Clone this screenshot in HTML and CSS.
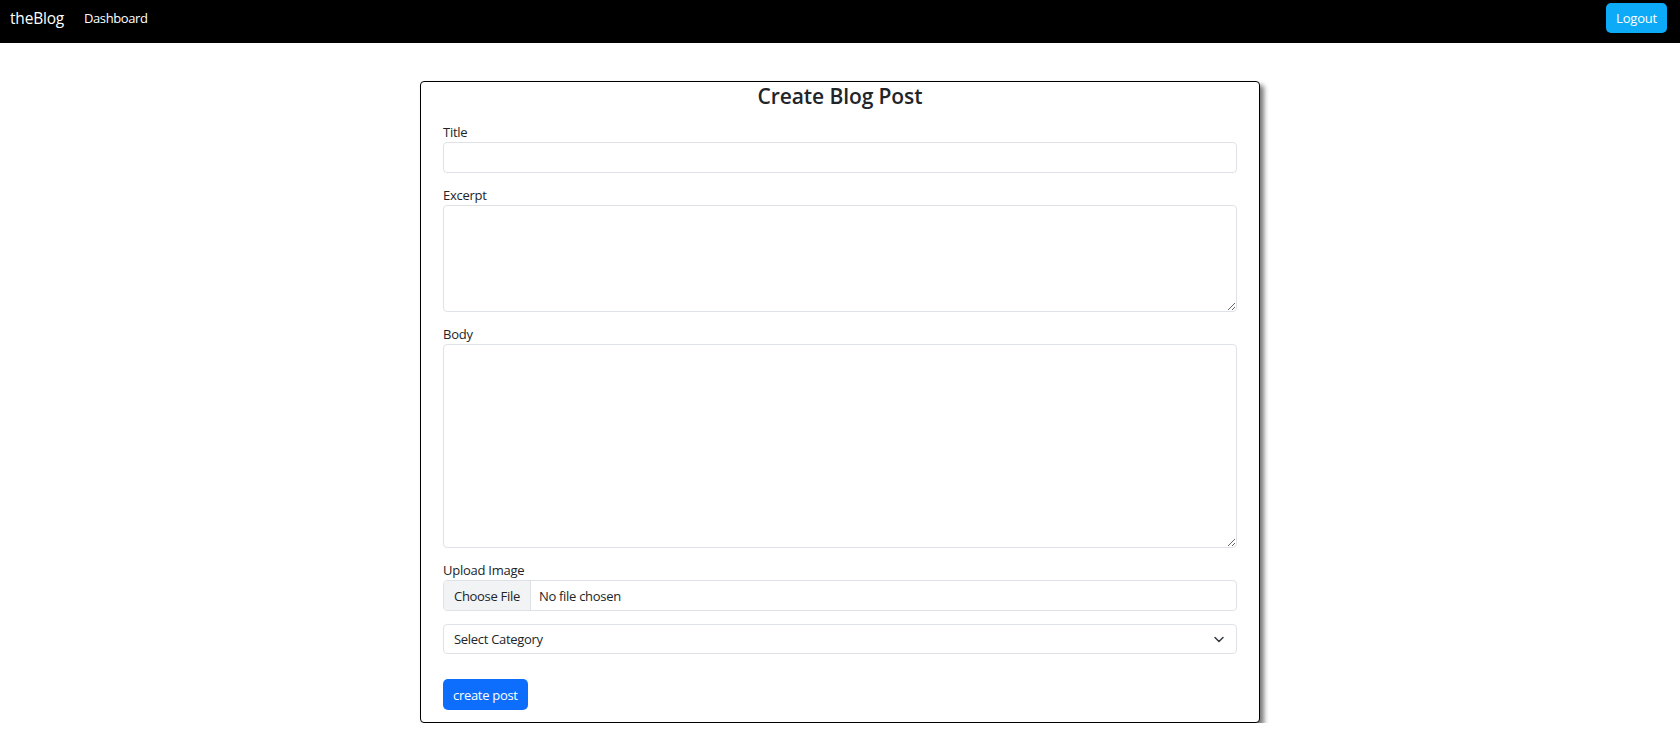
FILE: index.html
```html
<!DOCTYPE html>
<html lang="en">
<head>
<meta charset="utf-8">
<title>theBlog - Create Blog Post</title>
<link rel="stylesheet" href="styles.css">
</head>
<body>
<nav class="navbar">
  <div class="nav-row">
    <div class="nav-left">
      <a class="brand" href="#">theBlog</a>
      <a class="nav-link" href="#">Dashboard</a>
    </div>
    <button class="btn-logout" type="button">Logout</button>
  </div>
</nav>
<main class="page">
  <form class="card">
    <h3 class="card-title">Create Blog Post</h3>
    <div class="field">
      <label class="label" for="title">Title</label>
      <input class="control" id="title" type="text">
    </div>
    <div class="field">
      <label class="label" for="excerpt">Excerpt</label>
      <textarea class="control area-excerpt" id="excerpt"></textarea>
    </div>
    <div class="field">
      <label class="label" for="body">Body</label>
      <textarea class="control area-body" id="body"></textarea>
    </div>
    <div class="field">
      <span class="label">Upload Image</span>
      <div class="file-input">
        <span class="file-btn">Choose File</span>
        <span class="file-name">No file chosen</span>
      </div>
    </div>
    <div class="field select-wrap">
      <select class="control select">
        <option>Select Category</option>
      </select>
      <svg class="chevron" width="10" height="7" viewBox="0 0 10 7" aria-hidden="true"><path d="M1 1.5l4 4 4-4" fill="none" stroke="#343a40" stroke-width="1.5" stroke-linecap="round" stroke-linejoin="round"/></svg>
    </div>
    <div class="actions">
      <button class="btn-primary" type="button">create post</button>
    </div>
  </form>
</main>
</body>
</html>
```
FILE: styles.css
```css
* { box-sizing: border-box; }
html, body { margin: 0; padding: 0; }
body {
  font-family: "Open Sans", "Noto Sans", "Liberation Sans", sans-serif;
  color: #212529;
  background: #fff;
  font-size: 13px;
  letter-spacing: -0.25px;
}
.navbar {
  background: #000;
  height: 43px;
  padding: 0 13px 7px 10px;
}
.nav-row {
  height: 36px;
  display: flex;
  align-items: center;
  justify-content: space-between;
}
.nav-left { display: flex; align-items: center; gap: 20px; }
.brand {
  color: #fff;
  text-decoration: none;
  font-size: 15.5px;
  line-height: 24px;
  letter-spacing: -0.2px;
}
.nav-link {
  color: #fff;
  text-decoration: none;
  font-size: 13px;
  line-height: 24px;
  letter-spacing: -0.4px;
}
.btn-logout {
  font-family: inherit;
  background: #0dabf7;
  color: #fff;
  border: 0;
  border-radius: 5px;
  height: 30px;
  padding: 0 10px;
  font-size: 13px;
  letter-spacing: -0.2px;
}
.page {
  display: flex;
  justify-content: center;
  padding-top: 38px;
}
.card {
  width: 840px;
  border: 1px solid #000;
  border-radius: 4px;
  box-shadow: 4px 4px 5px #7a7a7a;
  padding: 0 22px 12px;
  display: flex;
  flex-direction: column;
  gap: 12px;
  background: #fff;
}
.card-title {
  margin: 0 0 -1px;
  text-align: center;
  font-size: 21px;
  font-weight: 600;
  line-height: 29px;
  letter-spacing: -0.1px;
  color: #212529;
}
.field { display: flex; flex-direction: column; }
.label {
  display: block;
  font-size: 13px;
  line-height: 20px;
}
.control {
  display: block;
  width: 100%;
  height: 31px;
  border: 1px solid #dee2e6;
  border-radius: 4px;
  font-family: inherit;
  font-size: 13px;
  letter-spacing: -0.3px;
  padding: 4px 10px;
  color: #212529;
  background: #fff;
}
.area-excerpt { height: 107px; resize: vertical; }
.area-body { height: 204px; resize: vertical; }
.file-input {
  display: flex;
  align-items: stretch;
  height: 31px;
  border: 1px solid #dee2e6;
  border-radius: 4px;
  overflow: hidden;
  font-size: 13px;
  letter-spacing: -0.3px;
}
.file-btn {
  display: flex;
  align-items: center;
  padding: 0 10px;
  background: #f1f3f5;
  border-right: 1px solid #dee2e6;
}
.file-name {
  display: flex;
  align-items: center;
  padding-left: 8px;
}
.select-wrap { position: relative; margin-top: 1px; }
.select {
  appearance: none;
  -webkit-appearance: none;
  height: 30px;
  padding: 0 10px;
}
.chevron {
  position: absolute;
  right: 13px;
  top: 12px;
}
.actions { padding-top: 13px; }
.btn-primary {
  font-family: inherit;
  background: #0d6efd;
  color: #fff;
  border: 0;
  border-radius: 5px;
  height: 31px;
  padding: 0 10px;
  font-size: 13px;
  letter-spacing: -0.3px;
}
```
